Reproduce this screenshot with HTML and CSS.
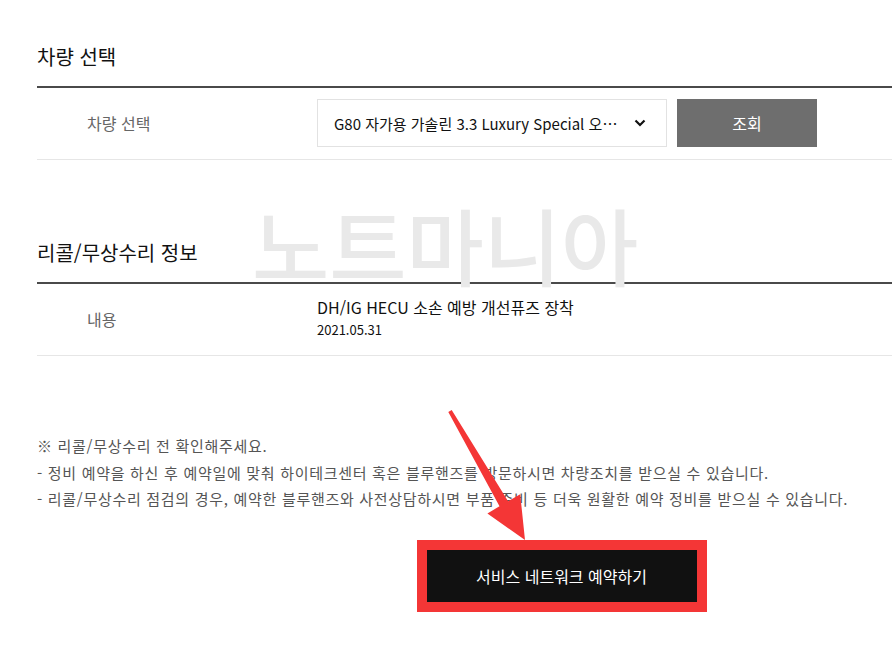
FILE: index.html
```html
<!DOCTYPE html>
<html lang="ko">
<head>
  <meta charset="UTF-8">
  <title>리콜/무상수리 조회</title>
  <link rel="stylesheet" href="styles.css">
</head>
<body>
  <div class="page">
    <section class="block">
      <h2>차량 선택</h2>
      <div class="row row-car">
        <div class="label">차량 선택</div>
        <div class="field">
          <div class="select">
            <span class="select-text">G80 자가용 가솔린 3.3 Luxury Special 오…</span>
            <svg class="chevron" width="12" height="8" viewBox="0 0 12 8">
              <polyline points="1.5,1.5 6,6 10.5,1.5" fill="none" stroke="#111" stroke-width="2.2"/>
            </svg>
          </div>
          <button class="btn-search">조회</button>
        </div>
      </div>
    </section>

    <section class="block block-recall">
      <h2>리콜/무상수리 정보</h2>
      <div class="row row-recall">
        <div class="label">내용</div>
        <div class="recall-info">
          <div class="recall-title">DH/IG HECU 소손 예방 개선퓨즈 장착</div>
          <div class="recall-date">2021.05.31</div>
        </div>
      </div>
    </section>

    <div class="notes">
      <p>※ 리콜/무상수리 전 확인해주세요.</p>
      <p>- 정비 예약을 하신 후 예약일에 맞춰 하이테크센터 혹은 블루핸즈를 방문하시면 차량조치를 받으실 수 있습니다.</p>
      <p>- 리콜/무상수리 점검의 경우, 예약한 블루핸즈와 사전상담하시면 부품 준비 등 더욱 원활한 예약 정비를 받으실 수 있습니다.</p>
    </div>

    <div class="actions">
      <span class="highlight"><button class="btn-book">서비스 네트워크 예약하기</button></span>
    </div>
  </div>

  <!-- watermark + annotation arrow lie over the page -->
  <div class="watermark">노트마니아</div>
  <svg class="arrow" width="892" height="648" viewBox="0 0 892 648">
    <polygon points="448.3,412 451.7,410 508.1,501.3 520.2,494.2 525,540 487.4,513.4 499.5,506.3" fill="#f43636"/>
  </svg>
</body>
</html>
```

FILE: styles.css
```css
html, body {
  margin: 0;
  overflow: hidden;
  background: #fff;
}

body {
  font-family: "Noto Sans CJK KR", "Noto Sans", sans-serif;
  color: #222;
  position: relative;
  width: 892px;
  height: 648px;
}

.page {
  width: 1049px;
  padding: 43px 0 0 37px;
}

h2 {
  margin: 0 0 15px;
  font-size: 20px;
  line-height: 28px;
  font-weight: 400;
  color: #111;
}

.row {
  display: flex;
  align-items: center;
  border-top: 2px solid #4a4a4a;
  border-bottom: 1px solid #e6e6e6;
}

.label {
  width: 230px;
  padding-left: 50px;
  font-size: 16px;
  color: #666;
}

.row-car {
  padding: 11px 0 12px;
}

.field {
  display: flex;
  gap: 10px;
}

.select {
  width: 350px;
  height: 48px;
  box-sizing: border-box;
  border: 1px solid #e2e2e2;
  padding: 0 20px 0 16px;
  display: flex;
  align-items: center;
  justify-content: space-between;
}

.select-text {
  font-size: 15px;
  color: #111;
  white-space: nowrap;
}

.btn-search {
  width: 140px;
  height: 48px;
  border: none;
  background: #6e6e6e;
  color: #fff;
  font-family: inherit;
  font-size: 16px;
}

.block-recall {
  margin-top: 79px;
}

.row-recall {
  padding: 12px 0 13px;
}

.recall-title {
  font-size: 16px;
  line-height: 22px;
  color: #111;
}

.recall-date {
  font-size: 13px;
  line-height: 24px;
  color: #111;
}

.notes {
  margin-top: 77px;
  font-size: 15px;
  line-height: 26.5px;
  letter-spacing: 0.7px;
  color: #555;
}

.notes p {
  margin: 0;
}

.actions {
  display: flex;
  justify-content: center;
  margin-top: 27px;
}

.highlight {
  display: inline-block;
  border: 10px solid #f43636;
}

.btn-book {
  display: block;
  width: 270px;
  height: 52px;
  border: none;
  background: #111;
  color: #fff;
  font-family: inherit;
  font-size: 16px;
}

.watermark {
  position: absolute;
  left: 252px;
  top: 206px;
  font-size: 84px;
  line-height: 76px;
  font-weight: 500;
  color: #e9e9e9;
  white-space: nowrap;
}

.arrow {
  position: absolute;
  left: 0;
  top: 0;
}
```
